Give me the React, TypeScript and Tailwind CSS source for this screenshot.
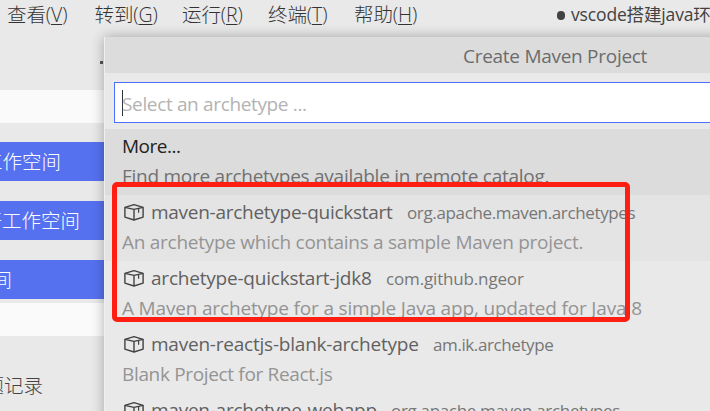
import React from "react";

const menus = [
  { label: "查看", key: "V", width: "w-[87.5px]" },
  { label: "转到", key: "G", width: "w-[87.5px]" },
  { label: "运行", key: "R", width: "w-[86px]" },
  { label: "终端", key: "T", width: "w-[86px]" },
  { label: "帮助", key: "H", width: "w-[87px]" },
];

const archetypes = [
  {
    name: "maven-archetype-quickstart",
    nameClass: "w-[242px] tracking-[-0.27px]",
    group: "org.apache.maven.archetypes",
    groupClass: "tracking-[-0.36px]",
    detail: "An archetype which contains a sample Maven project.",
    detailClass: "tracking-[-0.27px]",
    bg: "bg-[#e4e4e4]",
  },
  {
    name: "archetype-quickstart-jdk8",
    nameClass: "w-[221px] tracking-[-0.21px]",
    group: "com.github.ngeor",
    groupClass: "tracking-[-0.16px]",
    detail: "A Maven archetype for a simple Java app, updated for Java 8",
    detailClass: "tracking-[-0.17px]",
    bg: "",
  },
  {
    name: "maven-reactjs-blank-archetype",
    nameClass: "w-[268px] tracking-[-0.22px]",
    group: "am.ik.archetype",
    groupClass: "tracking-[-0.4px]",
    detail: "Blank Project for React.js",
    detailClass: "tracking-[-0.34px]",
    bg: "",
  },
  {
    name: "maven-archetype-webapp",
    nameClass: "w-[226px] tracking-[-0.25px]",
    group: "org.apache.maven.archetypes",
    groupClass: "tracking-[-0.33px]",
    detail: "",
    detailClass: "",
    bg: "",
  },
];

function PackageIcon() {
  return (
    <svg className="mr-[7px] ml-[2px] h-[18px] w-5 shrink-0" viewBox="0 0 20 18" fill="none" stroke="#424242" strokeWidth="1.4" strokeLinejoin="round">
      <path d="M.9 4.4 10 1.6l9.1 2.8v9.7L10 17 .9 14.1z" />
      <path d="M.9 4.4 10 6.4l9.1-2M10 6.4V17" />
      <path d="M14.6 5.4v4.4" strokeWidth="1.2" />
    </svg>
  );
}

function MenuBar() {
  return (
    <div className="flex h-[29px] items-center pl-[7px] text-[19.5px] font-light text-[#333333]">
      {menus.map((m) => (
        <span key={m.key} className={`shrink-0 whitespace-nowrap tracking-[-0.1px] ${m.width}`}>
          {m.label}(<span className="underline decoration-1 underline-offset-2">{m.key}</span>)
        </span>
      ))}
      <span className="ml-[116px] flex shrink-0 items-center whitespace-nowrap text-[17.5px] font-normal tracking-[-0.15px] text-[#424242]">
        <span className="mt-px mr-[6px] h-[9px] w-[8px] rounded-full bg-[#424242]" />
        vscode搭建java环境
      </span>
    </div>
  );
}

function SideButton({ label, end }: { label: string; end: string }) {
  return (
    <div className="h-[39px] w-full bg-[#5571f0] text-white">
      <div className={`flex h-full items-center justify-end whitespace-nowrap ${end}`}>{label}</div>
    </div>
  );
}

function Sidebar() {
  return (
    <div className="w-[110px] overflow-hidden text-[19.5px] font-light">
      <div className="flex h-[61px] items-end justify-end pr-[7px] pb-[26px]">
        <span className="h-[3px] w-[3px] bg-[#555555]" />
      </div>
      <div className="h-[33px] bg-[#fafafa]" />
      <div className="mt-[19px] flex flex-col gap-5">
        <SideButton label="打开工作空间" end="w-[61px]" />
        <SideButton label="打开工作空间" end="w-[80px]" />
        <SideButton label="空间" end="w-[12px]" />
      </div>
      <div className="mt-1 h-[33px] bg-[#fafafa]" />
      <div className="mt-[35px] flex w-[43px] justify-end whitespace-nowrap text-[#444444]">问题记录</div>
    </div>
  );
}

function QuickPick() {
  return (
    <div className="absolute top-[37px] left-[104px] h-[400px] w-[900px] border-l border-[#efefef] bg-[#e9e9e9] text-[19px] shadow-[0_0_12px_rgba(0,0,0,0.3)]">
      <div className="flex h-9 items-center bg-[#dcdcdc] pl-[358px] text-[#6c6c6c]">
        <span className="mt-[2px] whitespace-nowrap tracking-[-0.28px]">Create Maven Project</span>
      </div>
      <div className="px-[9px] pt-[9px] pb-[6px]">
        <div className="flex h-[41px] items-center border border-[#4d6fff] bg-white pl-[7px]">
          <span className="h-[26px] w-px bg-[#333333]" />
          <span className="-ml-px mt-[3px] whitespace-nowrap tracking-[-0.35px] text-[#b3b3b3]">Select an archetype ...</span>
        </div>
      </div>
      <div className="h-[66px] bg-[#dcdcdc] pl-[17px] leading-[30px] whitespace-nowrap">
        <div className="h-[30px] pt-[2px] tracking-[-0.5px] text-[#222222]">More...</div>
        <div className="pt-[2px] tracking-[-0.26px] text-[#717171]">Find more archetypes available in remote catalog.</div>
      </div>
      {archetypes.map((a) => (
        <div key={a.name} className={`h-[66px] pl-[17px] leading-[30px] whitespace-nowrap ${a.bg}`}>
          <div className="flex h-[30px] items-center pt-[4px]">
            <PackageIcon />
            <span className={`shrink-0 text-[#616161] ${a.nameClass}`}>{a.name}</span>
            <span className={`ml-[14px] pt-px text-[17px] text-[#777777] ${a.groupClass}`}>{a.group}</span>
          </div>
          <div className={`pt-[2px] text-[#949494] ${a.detailClass}`}>{a.detail}</div>
        </div>
      ))}
    </div>
  );
}

export default function App() {
  return (
    <div className="relative h-[411px] w-[710px] overflow-hidden bg-[#e9e9e9] font-['Open_Sans','Noto_Sans_CJK_SC',sans-serif]">
      <MenuBar />
      <Sidebar />
      <QuickPick />
      <div className="absolute top-[182px] left-[112px] h-[140px] w-[518px] rounded-[5px] border-[5px] border-[#ff1e12]" />
    </div>
  );
}
